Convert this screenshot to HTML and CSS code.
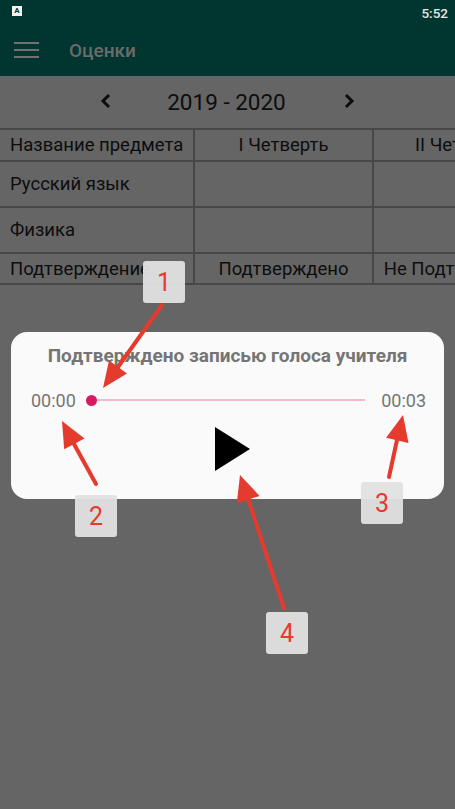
FILE: index.html
```html
<!DOCTYPE html>
<html lang="ru">
<head>
<meta charset="utf-8">
<link rel="stylesheet" href="styles.css">
</head>
<body>
<div class="screen">
  <header class="topbar">
    <div class="status">
      <span class="status-icon">A</span>
      <span class="status-time">5:52</span>
    </div>
    <div class="appbar">
      <span class="burger"><i></i><i></i><i></i></span>
      <span class="app-title">Оценки</span>
    </div>
  </header>

  <div class="year-row">
    <svg class="chev" width="12" height="16" viewBox="0 0 12 16"><path d="M9 2 L3 8 L9 14" fill="none" stroke="#0d0d0d" stroke-width="3"/></svg>
    <span class="year">2019 - 2020</span>
    <svg class="chev" width="12" height="16" viewBox="0 0 12 16"><path d="M3 2 L9 8 L3 14" fill="none" stroke="#0d0d0d" stroke-width="3"/></svg>
  </div>

  <div class="table-wrap">
    <div class="grid">
      <div class="cell left">Название предмета</div>
      <div class="cell center">I Четверть</div>
      <div class="cell center">II Четверть</div>

      <div class="cell left">Русский язык</div>
      <div class="cell"></div>
      <div class="cell"></div>

      <div class="cell left">Физика</div>
      <div class="cell"></div>
      <div class="cell"></div>

      <div class="cell left">Подтверждение</div>
      <div class="cell center">Подтверждено</div>
      <div class="cell center">Не Подтверждено</div>
    </div>
  </div>

  <div class="dialog">
    <div class="dialog-title">Подтверждено записью голоса учителя</div>
    <div class="player-row">
      <span class="time">00:00</span>
      <div class="slider"><span class="thumb"></span><span class="track"></span></div>
      <span class="time">00:03</span>
    </div>
    <div class="play-wrap">
      <svg width="35" height="44" viewBox="0 0 35 44"><polygon points="0,0 35,22 0,44" fill="#000"/></svg>
    </div>
  </div>

  <svg class="arrows" width="455" height="809" viewBox="0 0 455 809">
    <g stroke="#e53a2e" stroke-width="4" stroke-linecap="round" fill="none">
      <line x1="162" y1="305" x2="118" y2="367"/>
      <line x1="96" y1="484" x2="74" y2="444"/>
      <line x1="389" y1="477" x2="397" y2="440"/>
      <line x1="284" y1="608" x2="248" y2="499"/>
    </g>
    <g fill="#e53a2e">
      <polygon points="103,388 127,373.4 109,360.4"/>
      <polygon points="62,421 84.5,438.5 64.2,449.3"/>
      <polygon points="403,415 408.5,443 386.1,437.8"/>
      <polygon points="240,475 259.6,495.9 236.8,503.5"/>
    </g>
  </svg>

  <div class="tag tag1">1</div>
  <div class="tag tag2">2</div>
  <div class="tag tag3">3</div>
  <div class="tag tag4">4</div>
</div>
</body>
</html>
```

FILE: styles.css
```css
* { box-sizing: border-box; }
html, body { margin: 0; padding: 0; }
body {
  width: 455px;
  height: 809px;
  overflow: hidden;
  background: #656565;
  font-family: Roboto, "Noto Sans", sans-serif;
}
.screen {
  position: relative;
  width: 455px;
  height: 809px;
  background: #656565;
}
.topbar { background: #003530; }
.status {
  height: 24px;
  display: flex;
  align-items: center;
  justify-content: space-between;
  padding: 0 7px 0 12px;
}
.status-icon {
  width: 10px;
  height: 10px;
  background: #f2f2f2;
  color: #003530;
  font-size: 8px;
  font-weight: 700;
  line-height: 9px;
  text-align: center;
  margin-top: -2px;
}
.status-time {
  color: #e8e8e8;
  font-size: 13.5px;
  font-weight: 500;
  margin-top: 2px;
}
.appbar {
  height: 52px;
  display: flex;
  align-items: center;
  padding-left: 14px;
}
.burger {
  display: flex;
  flex-direction: column;
  gap: 4.5px;
  width: 25px;
}
.burger i {
  display: block;
  height: 2.5px;
  background: #717171;
}
.app-title {
  margin-left: 30px;
  color: #6b6b6b;
  font-size: 19px;
  font-weight: 500;
}
.year-row {
  height: 52px;
  display: flex;
  align-items: center;
  justify-content: center;
}
.chev { display: block; margin-top: -2px; }
.year {
  font-size: 22.5px;
  color: #0d0d0d;
  margin: 0 57px 0 55px;
}
.table-wrap {
  width: 455px;
  overflow: hidden;
}
.grid {
  display: grid;
  grid-template-columns: 193px 177px 177px;
  grid-template-rows: 30px 44px 44px 29px;
  gap: 2px;
  padding: 2px 0;
  width: 549px;
  background: #484848;
}
.cell {
  background: #656565;
  color: #0d0d0d;
  font-size: 18.5px;
  display: flex;
  align-items: center;
  white-space: nowrap;
  overflow: hidden;
}
.cell.left { padding-left: 10px; }
.cell.center { justify-content: center; }

.dialog {
  position: absolute;
  left: 11px;
  top: 332px;
  width: 433px;
  height: 167px;
  background: #fafafa;
  border-radius: 16px;
  display: flex;
  flex-direction: column;
  align-items: center;
  padding-top: 13px;
}
.dialog-title {
  font-size: 19px;
  font-weight: 700;
  color: #757575;
  line-height: 22px;
}
.player-row {
  align-self: stretch;
  display: flex;
  align-items: center;
  height: 24px;
  margin-top: 21px;
  padding: 0 18px 0 20px;
}
.time {
  font-size: 18px;
  color: #757575;
}
.slider {
  flex: 1;
  display: flex;
  align-items: center;
  margin: 0 16px 0 10px;
}
.thumb {
  width: 11px;
  height: 11px;
  border-radius: 50%;
  background: #d81b60;
  flex: none;
}
.track {
  flex: 1;
  height: 1.5px;
  background: #f5b8cc;
}
.play-wrap {
  margin-top: 15px;
  padding-left: 10px;
}
.play-wrap svg { display: block; }

.arrows {
  position: absolute;
  left: 0;
  top: 0;
  pointer-events: none;
}
.tag {
  position: absolute;
  width: 42px;
  height: 42px;
  background: rgba(226, 226, 226, 0.95);
  border-radius: 3px;
  color: #e53a2e;
  font-size: 25px;
  display: flex;
  align-items: center;
  justify-content: center;
}
.tag1 { left: 143px; top: 261px; }
.tag2 { left: 75px; top: 495px; }
.tag3 { left: 361px; top: 482px; }
.tag4 { left: 266px; top: 612px; }
```
